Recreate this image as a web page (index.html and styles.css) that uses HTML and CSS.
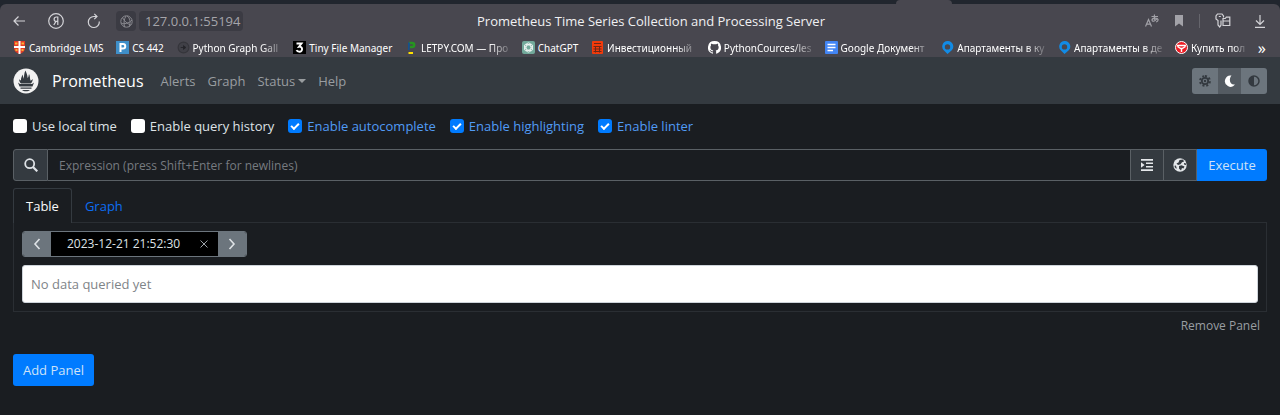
FILE: index.html
```html
<!DOCTYPE html>
<html lang="en">
<head>
<meta charset="utf-8">
<title>Prometheus Time Series Collection and Processing Server</title>
<link rel="stylesheet" href="styles.css">
</head>
<body>
<header class="browser">
  <div class="tab-strip"><div class="active-tab"></div></div>
  <div class="chrome">
    <div class="toolbar">
      <div class="tools tools-left">
        <button class="tool" aria-label="Back"><svg width="14" height="14" viewBox="0 0 14 14"><path d="M13 7H2M6.500 2.500 2 7l4.500 4.500"/></svg></button>
        <button class="tool" aria-label="Yandex"><svg width="16" height="16" viewBox="0 0 16 16"><circle cx="8" cy="8" r="7.300"/><path d="M9.800 12V4H8.300C5.400 4 5.400 8.400 8.300 8.400h1.500M8 8.400 5.800 12"/></svg></button>
        <button class="tool" aria-label="Reload"><svg width="16" height="16" viewBox="0 0 16 16"><path d="M13.300 8.500A5.500 5.500 0 1 1 7.800 3.500H11M8.300.8 11 3.500 8.300 6.200"/></svg></button>
        <div class="address">
          <button class="site" aria-label="Site information"><svg width="13" height="13" viewBox="0 0 13 13"><circle cx="6.500" cy="6.500" r="5.700"/><path d="M2.500 2.500c1 3 5 6.500 8.300 7.500M6 1C4 4 3.500 8 4.500 12M7 1c3 2 4 6 2 11M1 8c3 1.500 8 .5 11-3"/></svg></button>
          <input class="url" aria-label="Address" value="127.0.0.1:55194">
        </div>
      </div>
      <div class="page-title">Prometheus Time Series Collection and Processing Server</div>
      <div class="tools tools-right">
        <button class="tool dim" aria-label="Translate"><svg width="14" height="14" viewBox="0 0 14 14"><path d="M.5 12.500 3.500 5.500l3 7M1.500 10.200h4M6.500 2.500H13M9.500.5c-.4 3 0 5 .8 6.500M12 4c-.6 3-5 4.500-5 2s5.500-2.500 6-.5c.3 1.500-.8 2.200-2 2.500"/></svg></button>
        <button class="tool dim" aria-label="Bookmark page"><svg width="10" height="12" viewBox="0 0 10 12"><path class="solid" d="M1 0h8v11.500L5 8.500l-4 3z"/></svg></button>
        <span class="divider"></span>
        <button class="tool" aria-label="Passwords"><svg width="16" height="16" viewBox="0 0 16 16"><path d="M8.500 4.500V3L7 1H2.500L1 3v3l2 1.500V12l1.700 2L6 12V7.500M3.800 3.500h2M8 5.500h2.300l1-1.300h3.500v8.300H8zM8 8h6.800"/></svg></button>
        <button class="tool" aria-label="Downloads"><svg width="12" height="14" viewBox="0 0 12 14"><path d="M6 1v9M2 6.500l4 4 4-4M1 13.300h10"/></svg></button>
      </div>
    </div>
    <nav class="bookmarks" aria-label="Bookmarks">
      <a href="#"><svg width="13" height="13" viewBox="0 0 13 13"><path fill="#e33b26" d="M1 0h11v7c0 3-2 5-5.500 6C3 12 1 10 1 7z"/><path fill="#fff" d="M5.500 0h2v5H12v2H7.500v6h-2V7H1V5h4.500z"/><path fill="#f7b136" d="M2 1.500h2.500v2H2zM8.500 1.500H11v2H8.500zM2.500 8h2v2h-2zM8.500 8h2v2h-2z"/></svg><span>Cambridge LMS</span></a>
      <a href="#"><svg width="13" height="13" viewBox="0 0 13 13"><path fill="#3f8fc9" d="M0 0h13v13H0z"/><path fill="none" stroke="#fff" stroke-width="2" d="M4.500 11V3H7c3 0 3 4.500 0 4.500H5"/></svg><span>CS 442</span></a>
      <a href="#"><svg width="13" height="13" viewBox="0 0 14 14"><circle cx="7" cy="7" r="5.800" fill="#404047" stroke="#35353b" stroke-width="1.200"/><path d="M4 7h4M7 5l2.500 2L7 9z" fill="#25252a" stroke="#25252a"/></svg><span class="fade">Python Graph Gall</span></a>
      <a href="#"><svg width="13" height="13" viewBox="0 0 13 13"><path d="M0 0h13v13H0z"/><path fill="none" stroke="#fff" stroke-width="1.900" d="M3.500 2.500h5L6 5.700c4-.5 4 5 .5 5-1.500 0-2.500-.5-3-1.500"/></svg><span>Tiny File Manager</span></a>
      <a href="#"><svg width="13" height="13" viewBox="0 0 13 13"><path fill="none" stroke="#26951f" stroke-width="2.400" d="M4 2h3c3 0 3 4 0 4H5"/><path fill="#15528d" d="M3 1.500h2L4.500 9H3z"/><path fill="#ffe000" d="M3.500 11H8v2H3.500z"/></svg><span class="fade">LETPY.COM — Про</span></a>
      <a href="#"><svg width="13" height="13" viewBox="0 0 13 13"><rect width="13" height="13" rx="2" fill="#72a99b"/><g fill="none" stroke="#fff" stroke-width=".8"><ellipse cx="6.500" cy="6.500" rx="2.500" ry="4.600"/><ellipse cx="6.500" cy="6.500" rx="2.500" ry="4.600" transform="rotate(60 6.500 6.500)"/><ellipse cx="6.500" cy="6.500" rx="2.500" ry="4.600" transform="rotate(120 6.500 6.500)"/></g></svg><span>ChatGPT</span></a>
      <a href="#"><svg width="13" height="13" viewBox="0 0 13 13"><rect x="1" width="11" height="13" rx="1" fill="#f23a0b"/><path fill="none" stroke="#6d2717" d="M3 2.500h7M2.500 5.500h8M2.500 8h8M2.500 10.500h8M4.500 5v6.500M8.500 5v6.500"/></svg><span class="fade">Инвестиционный</span></a>
      <a href="#"><svg width="13" height="13" viewBox="0 0 16 16"><path fill="#fff" d="M8 0a8 8 0 0 0-2.530 15.590c.4.070.55-.17.550-.38v-1.490c-2.010.37-2.530-.49-2.690-.94-.09-.23-.48-.94-.82-1.130-.28-.15-.68-.52-.01-.53.630-.01 1.080.58 1.230.82.720 1.210 1.870.87 2.330.66.070-.52.280-.87.510-1.070-1.780-.2-3.640-.89-3.640-3.950 0-.87.310-1.590.82-2.150-.08-.2-.36-1.020.08-2.120 0 0 .67-.21 2.200.82a7.600 7.600 0 0 1 4 0c1.530-1.040 2.200-.82 2.200-.82.440 1.100.16 1.920.08 2.120.51.560.82 1.270.82 2.150 0 3.070-1.870 3.750-3.650 3.950.290.250.540.730.540 1.480v2.200c0 .21.150.46.550.38A8 8 0 0 0 8 0z"/></svg><span class="fade">PythonCources/les</span></a>
      <a href="#"><svg width="13" height="13" viewBox="0 0 13 13"><rect width="13" height="13" rx="1" fill="#4285f4"/><path stroke="#fff" stroke-width="1.300" d="M2.500 3.500h8M2.500 6.500h8M2.500 9.500h5.500"/></svg><span class="fade">Google Документ</span></a>
      <a href="#"><svg width="13" height="13" viewBox="0 0 13 13"><path fill="#128be5" fill-rule="evenodd" d="M6.500 0a5.500 5.500 0 0 1 4 9.500L6.500 13 3 9.500A5.500 5.500 0 0 1 6.500 0zm0 3.200a2.700 2.700 0 1 0 0 5.400 2.700 2.700 0 0 0 0-5.400z"/></svg><span class="fade">Апартаменты в ку</span></a>
      <a href="#"><svg width="13" height="13" viewBox="0 0 13 13"><path fill="#128be5" fill-rule="evenodd" d="M6.500 0a5.500 5.500 0 0 1 4 9.500L6.500 13 3 9.500A5.500 5.500 0 0 1 6.500 0zm0 3.200a2.700 2.700 0 1 0 0 5.400 2.700 2.700 0 0 0 0-5.400z"/></svg><span class="fade">Апартаменты в де</span></a>
      <a href="#"><svg width="13" height="13" viewBox="0 0 13 13"><circle cx="6.500" cy="6.500" r="6" fill="#ed1c24" stroke="#fff"/><path fill="none" stroke="#fff" stroke-width="1.400" d="M2 4.500h9M2.500 5.500l3.300 2h1.400l3.300-2M6.500 7v4"/></svg><span class="fade last">Купить пол</span></a>
      <button class="more" aria-label="More bookmarks">»</button>
    </nav>
  </div>
</header>

<nav class="navbar">
  <a class="brand" href="#"><svg width="26" height="26" viewBox="0 0 26 26"><circle cx="13" cy="13" r="12.500" fill="#f2f2f2"/><path fill="#343a40" d="M8 15.500C6.500 14 6 12.500 6.300 11c.6 1 1 1.300 1.700 1.600C7.700 10 9 9 9.200 6.500c1 1.500 1.200 3 1 4.500 1.300-2.500.6-6 2.400-8.500.3 2 2.100 4 2 7.500 1-1 1-2.500 1.400-4 1.200 2 .7 4.500 1.600 6.700.8-.3 1.500-.8 2.100-1.700 0 2-.6 3.300-1.700 4.500zM5 14.500l2 1.500h12l2-1.500-1.500 4h-13zM7.500 19.500h11v1.300h-11zM9 22h8c-1.500 1.700-6.500 1.700-8 0z"/></svg><span>Prometheus</span></a>
  <div class="nav-links">
    <a href="#">Alerts</a>
    <a href="#">Graph</a>
    <a href="#" class="dropdown">Status</a>
    <a href="#">Help</a>
  </div>
  <div class="themes">
    <button aria-label="Light theme"><svg width="12" height="12" viewBox="0 0 12 12"><path fill="none" stroke="#343a40" stroke-width="2" stroke-dasharray="2 1.900" d="M6 1.100a4.900 4.900 0 1 1 0 9.800 4.900 4.900 0 1 1 0-9.800"/><circle cx="6" cy="6" r="3.200" fill="none" stroke="#343a40" stroke-width="1.800"/><circle cx="6" cy="6" r="1.200" fill="#343a40"/></svg></button>
    <button class="on" aria-label="Dark theme"><svg width="12" height="12" viewBox="0 0 12 12"><path fill="#fff" d="M7.500.6A5.600 5.600 0 1 0 11 9.500C6.500 10.500 4 5 7.500.6z"/></svg></button>
    <button aria-label="Browser theme"><svg width="12" height="12" viewBox="0 0 12 12"><circle cx="6" cy="6" r="5" fill="none" stroke="#343a40" stroke-width="1.500"/><path fill="#343a40" d="M6 1a5 5 0 0 0 0 10z"/></svg></button>
  </div>
</nav>

<main class="content">
  <div class="options">
    <label><input type="checkbox"><span>Use local time</span></label>
    <label><input type="checkbox"><span>Enable query history</span></label>
    <label><input type="checkbox" checked><span>Enable autocomplete</span></label>
    <label><input type="checkbox" checked><span>Enable highlighting</span></label>
    <label><input type="checkbox" checked><span>Enable linter</span></label>
  </div>

  <div class="query">
    <span class="addon search"><svg width="14" height="14" viewBox="0 0 14 14"><circle cx="5.700" cy="5.700" r="4.500" fill="none" stroke="#dee2e6" stroke-width="1.800"/><path stroke="#dee2e6" stroke-width="2.200" d="M9 9l4.300 4.300"/></svg></span>
    <input class="expression" aria-label="Expression" placeholder="Expression (press Shift+Enter for newlines)">
    <button class="addon" aria-label="Format expression"><svg width="12" height="12" viewBox="0 0 12 12"><path fill="#e4e7ea" d="M0 0h12v1.700H0zM5 3.400h7v1.700H5zM5 6.900h7v1.700H5zM0 10.300h12V12H0zM0 3.200 3.600 6 0 8.800z"/></svg></button>
    <button class="addon" aria-label="Metrics explorer"><svg width="14" height="14" viewBox="0 0 14 14"><circle cx="7" cy="7" r="6.700" fill="#e4e7ea"/><path fill="#343a40" d="M6.500 2 10 1.500l1 2-2 .8-1.500 2L5 7 3.500 5.500l2-1zM6 8l2.500-.8 3 1.300-1 2-1.500-.5-1 2.500-2-2zM11 5l2 .5v1.500l-2-.5zM2 7l1.500 2v2L1.500 9z"/></svg></button>
    <button class="execute">Execute</button>
  </div>

  <div class="tabs">
    <button class="tab active">Table</button>
    <button class="tab">Graph</button>
  </div>
  <section class="panel">
    <div class="time">
      <button class="step" aria-label="Earlier"><svg width="8" height="12" viewBox="0 0 8 12"><path d="M6.500 1 2 6l4.500 5"/></svg></button>
      <div class="stamp">
        <input aria-label="Evaluation time" value="2023-12-21 21:52:30">
        <button aria-label="Clear time"><svg width="8" height="8" viewBox="0 0 8 8"><path d="M.5.5l7 7M7.500.5l-7 7"/></svg></button>
      </div>
      <button class="step" aria-label="Later"><svg width="8" height="12" viewBox="0 0 8 12"><path d="M1.500 1 6 6l-4.500 5"/></svg></button>
    </div>
    <div class="notice">No data queried yet</div>
  </section>
  <div class="panel-actions"><button class="remove">Remove Panel</button></div>
  <button class="add">Add Panel</button>
</main>
</body>
</html>
```
FILE: styles.css
```css
* { box-sizing: border-box; }
body {
  margin: 0;
  background: #1a1d21;
  color: #dee2e6;
  font: 13px/20px "Open Sans", "Noto Sans", sans-serif;
}
button, input { font: inherit; color: inherit; margin: 0; padding: 0; border: 0; background: none; }
button { cursor: pointer; display: flex; align-items: center; justify-content: center; }
a { color: inherit; text-decoration: none; }
svg { display: block; flex: none; }

/* Browser window */
.browser { background: #21262e; }
.tab-strip { height: 4px; display: flex; justify-content: flex-end; padding-right: 328px; }
.active-tab { width: 56px; background: #48474f; border-radius: 6px 6px 0 0; }
.chrome { background: #48474f; border-radius: 6px 6px 0 0; }
.toolbar {
  display: grid;
  grid-template-columns: 1fr auto 1fr;
  align-items: center;
  height: 34px;
  padding: 0 14px 0 12px;
}
.tools { display: flex; align-items: center; }
.tools-left { gap: 22px; }
.tools-right { justify-content: flex-end; gap: 15px; }
.tool svg, .site svg { fill: none; stroke: #d4d4d8; stroke-width: 1.2; }
.tool.dim svg { stroke: #a2a2a8; }
.tool .solid { fill: #a2a2a8; stroke: none; }
.divider { width: 1px; height: 14px; background: #65656c; }
.tools-right .tool:last-child { margin-left: 8px; }
.address { display: flex; gap: 3px; margin-left: -8px; }
.site { width: 20px; height: 20px; background: #3b3b43; border-radius: 4px; }
.site svg { stroke: #89898f; stroke-width: 1; }
.url { width: 104px; height: 20px; padding: 0 2px 0 6px; background: #3b3b43; border-radius: 4px; color: #a5a5aa; }
.page-title { margin-left: 24px; color: #f0f0f2; white-space: nowrap; }

.bookmarks { display: flex; align-items: center; justify-content: space-between; height: 19px; padding: 0 14px 0 13px; font-size: 10px; font-family: "Noto Sans", sans-serif; color: #fff; }
.bookmarks a { display: flex; align-items: center; gap: 3px; flex: none; white-space: nowrap; }
.fade { min-width: 88px; mask-image: linear-gradient(to right, #000 78%, transparent 105%); }
.fade.last { min-width: 54px; }
.more { font-size: 16px; }

/* Navigation */
.navbar { display: flex; align-items: center; height: 47px; padding: 0 13px; background: #343a40; color: #999da0; }
.brand { display: flex; align-items: center; gap: 13px; color: #fff; font-size: 16px; }
.nav-links { display: flex; gap: 12px; margin-left: 17px; }
.dropdown { display: flex; align-items: center; gap: 3px; }
.dropdown::after { content: ""; border: 4px solid transparent; border-top-color: currentColor; border-bottom: 0; }
.themes { display: flex; margin-left: auto; border-radius: 3px; overflow: hidden; background: #6c757d; }
.themes button { width: 26px; height: 26px; }
.themes .on { width: 23px; background: #545b62; }

/* Content */
.content { padding: 12px 13px; }
.options { display: flex; gap: 14px; }
.options label { display: flex; align-items: center; gap: 5px; }
.options input { appearance: none; width: 14px; height: 14px; border-radius: 3px; background: #fff; display: grid; place-items: center; }
.options input:checked { background: #007bff; }
.options input:checked::after { content: ""; width: 6px; height: 3px; border: solid #fff; border-width: 0 0 2px 2px; rotate: -45deg; margin-bottom: 2px; }
.options input:checked + span { color: #519bf5; }

.query { display: flex; height: 32px; margin-top: 13px; }
.addon { display: flex; align-items: center; justify-content: center; flex: none; width: 33px; background: #343a40; border: 1px solid #5a6065; border-left-width: 0; }
.search { width: 35px; border-left-width: 1px; border-radius: 3px 0 0 3px; }
.expression { flex: 1; min-width: 0; padding: 0 11px; border: 1px solid #5a6065; border-left: 0; }
.expression::placeholder { color: #777b80; opacity: 1; font-size: 12px; }
.addon + .execute { width: 70px; border-radius: 0 3px 3px 0; }
.execute, .add { background: #007bff; color: #cfe2f7; }

.tabs { display: flex; height: 34px; margin-top: 7px; }
.tab { padding: 0 13px; color: #0c6df2; }
.tab, .tab.active { height: 35px; }
.tab.active { border: 1px solid #343a40; border-bottom: 0; border-radius: 3px 3px 0 0; background: #1a1d21; color: #f8f9fa; padding: 0 12px; z-index: 1; }
.panel { padding: 8px; border: 1px solid #2a2e33; }
.time { display: flex; width: 225px; height: 26px; border: 1px solid #6c757d; border-radius: 3px; overflow: hidden; font-size: 12px; }
.step { flex: none; width: 28px; background: #6c757d; }
.step svg { fill: none; stroke: #dee2e6; stroke-width: 1.6; }
.stamp { display: flex; align-items: center; flex: 1; min-width: 0; background: #000; padding: 0 10px 0 16px; }
.stamp input { flex: 1; min-width: 0; }
.stamp svg { stroke: #9da3a8; stroke-width: 1; }
.notice { margin-top: 8px; padding: 8px; border-radius: 3px; background: #fff; border: 1px solid #ced4da; color: #808488; }
.panel-actions { display: flex; justify-content: flex-end; padding: 4px 7px; }
.remove { color: #999da1; font-size: 12px; }
.add { width: 81px; height: 32px; margin-top: 14px; border-radius: 3px; }
```
